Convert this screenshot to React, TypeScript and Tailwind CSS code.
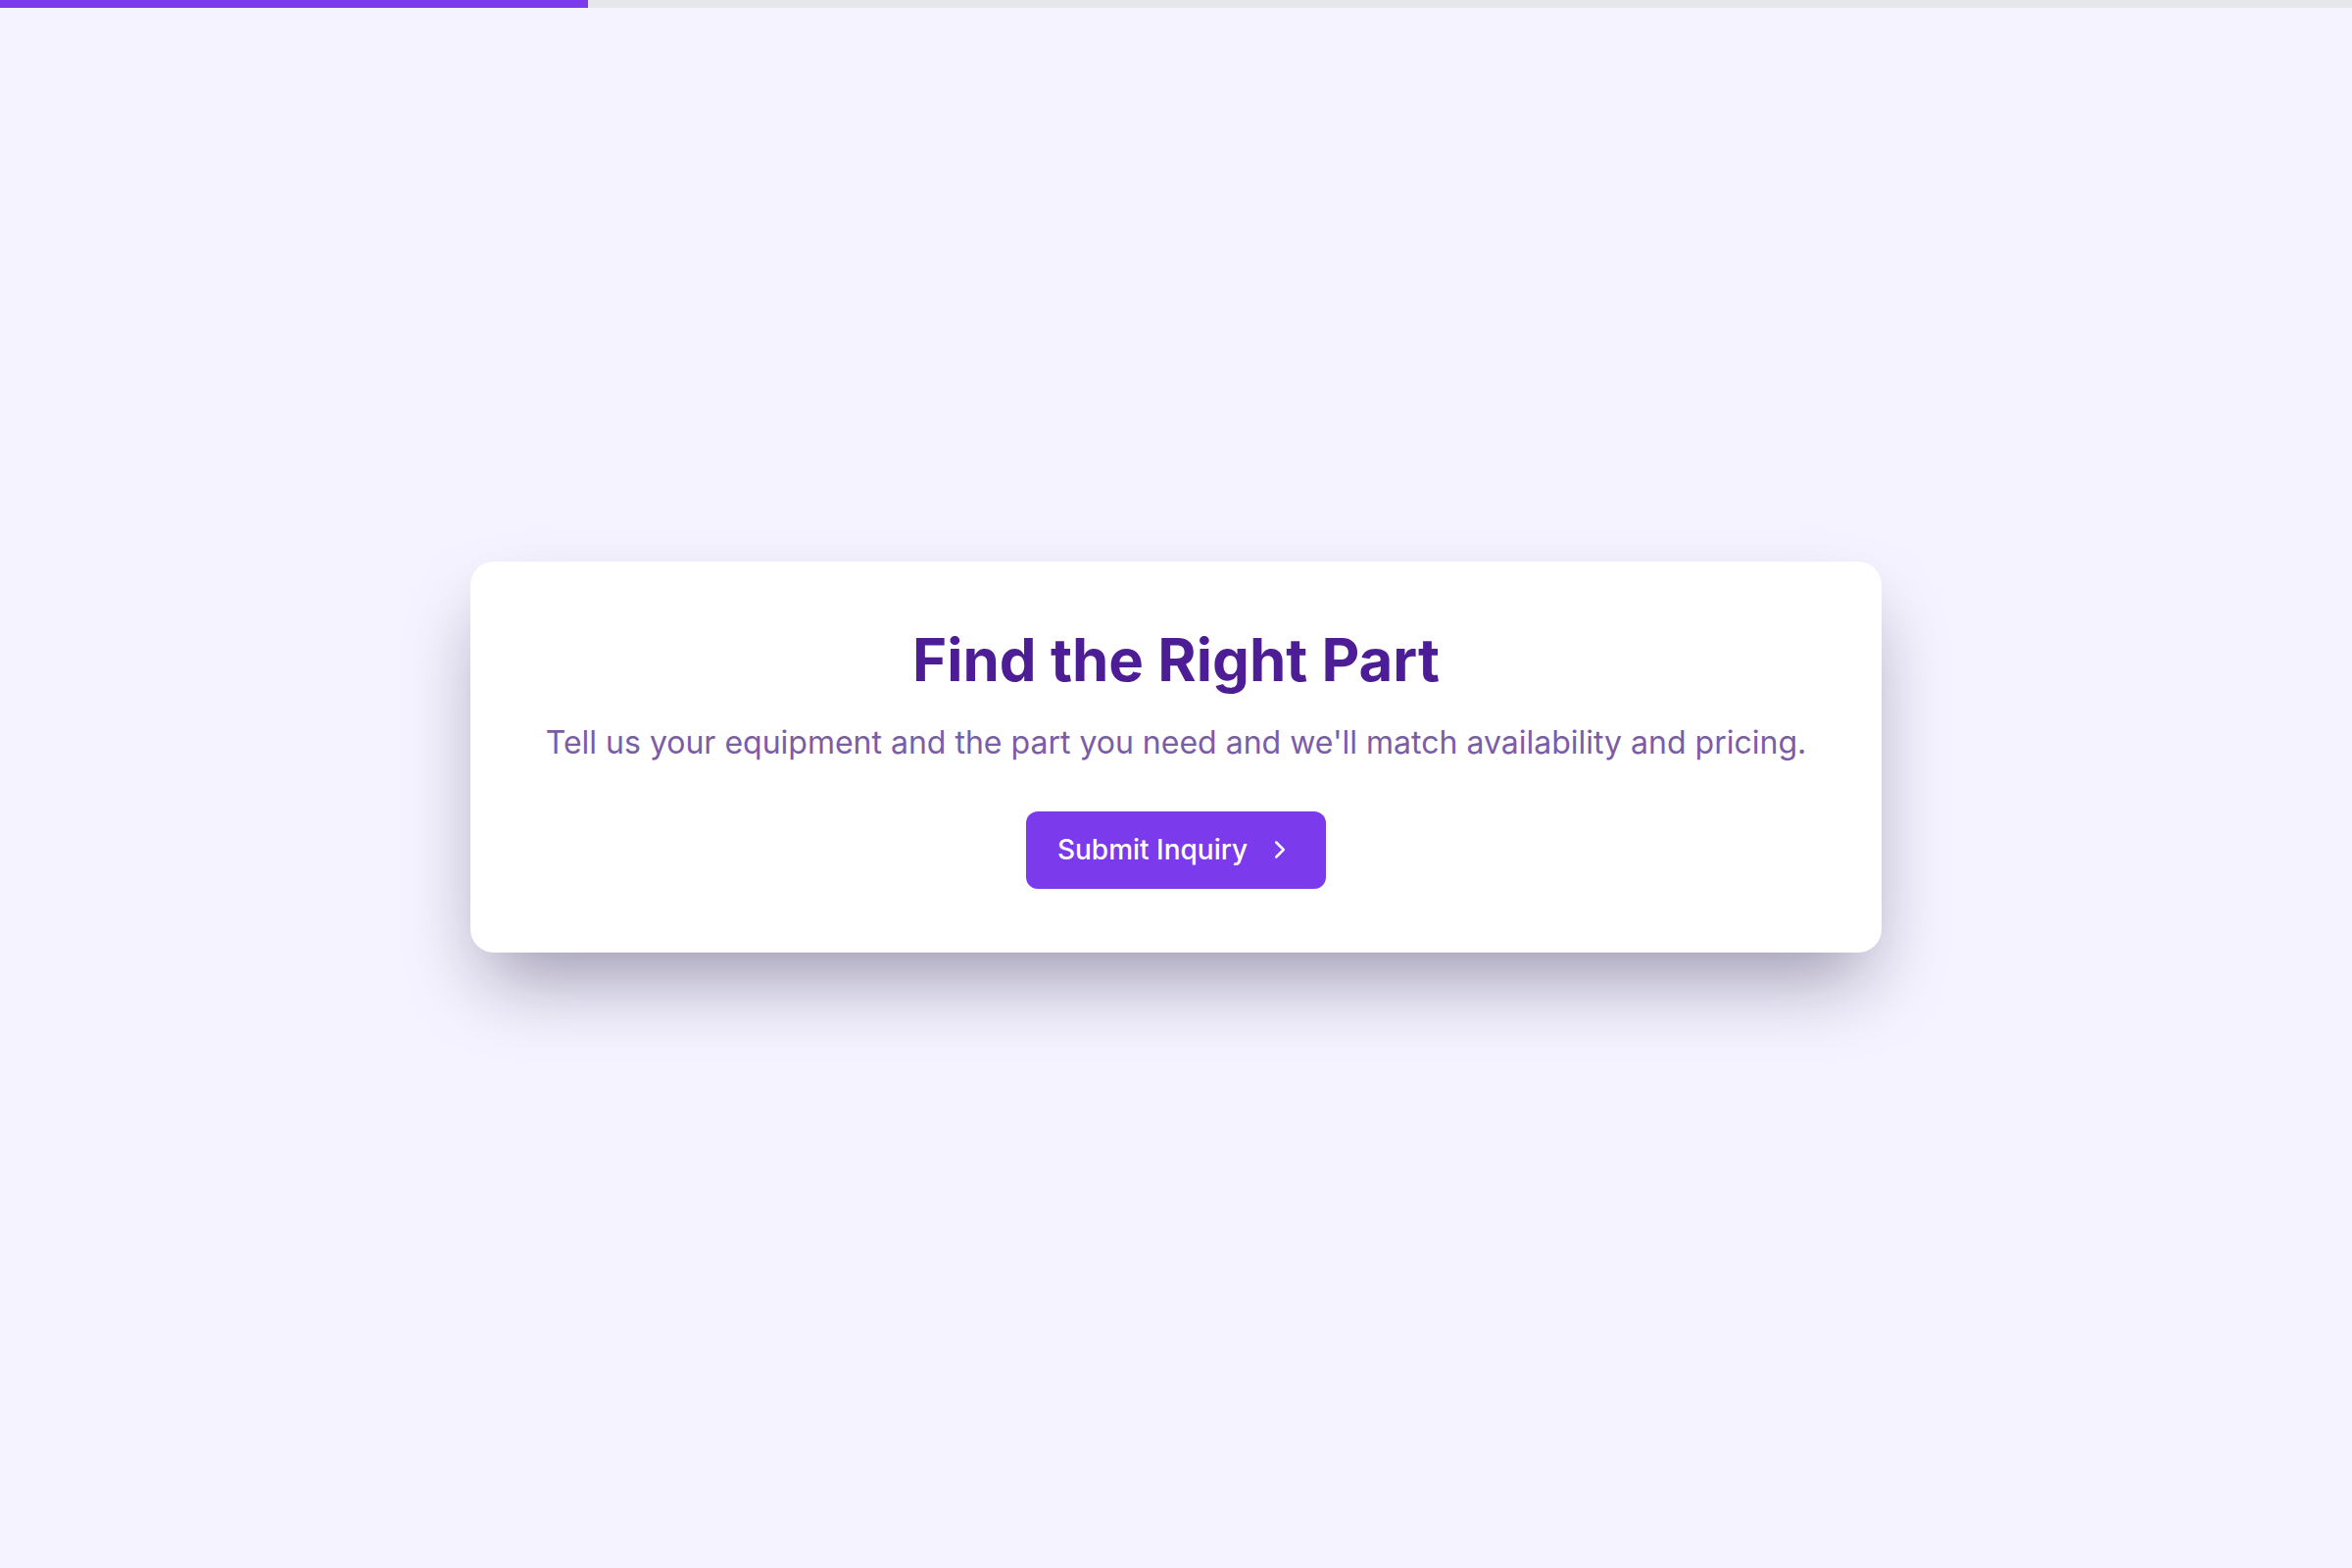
import { ChevronRight } from 'lucide-react';

export default function App() {
  const progress = 25;

  return (
    <div className="min-h-screen flex flex-col bg-[#f5f3ff] font-['Inter','Noto_Sans',sans-serif]">
      <div className="h-2 w-full bg-[#e5e7eb]">
        <div className="h-full bg-[#7c3aed]" style={{ width: `${progress}%` }} />
      </div>

      <main className="flex-1 flex items-center justify-center pb-16">
        <div className="w-[1440px] bg-white rounded-3xl shadow-[0_40px_80px_-16px_rgba(20,10,50,0.4)] pt-[70px] pb-[65px] flex flex-col items-center text-center">
          <h1 className="text-[60px] leading-none font-bold text-[#4c1d95]">Find the Right Part</h1>
          <p className="mt-[32px] text-[32px] leading-[45px] text-[#7b5ca8]">
            Tell us your equipment and the part you need and we'll match availability and pricing.
          </p>
          <button className="mt-[48px] h-[79px] pl-[32px] pr-[32px] flex items-center gap-[18px] rounded-xl bg-[#7c3aed] text-white text-[28px] font-medium">
            <span>Submit Inquiry</span>
            <ChevronRight className="w-[30px] h-[30px]" strokeWidth={2} />
          </button>
        </div>
      </main>
    </div>
  );
}
